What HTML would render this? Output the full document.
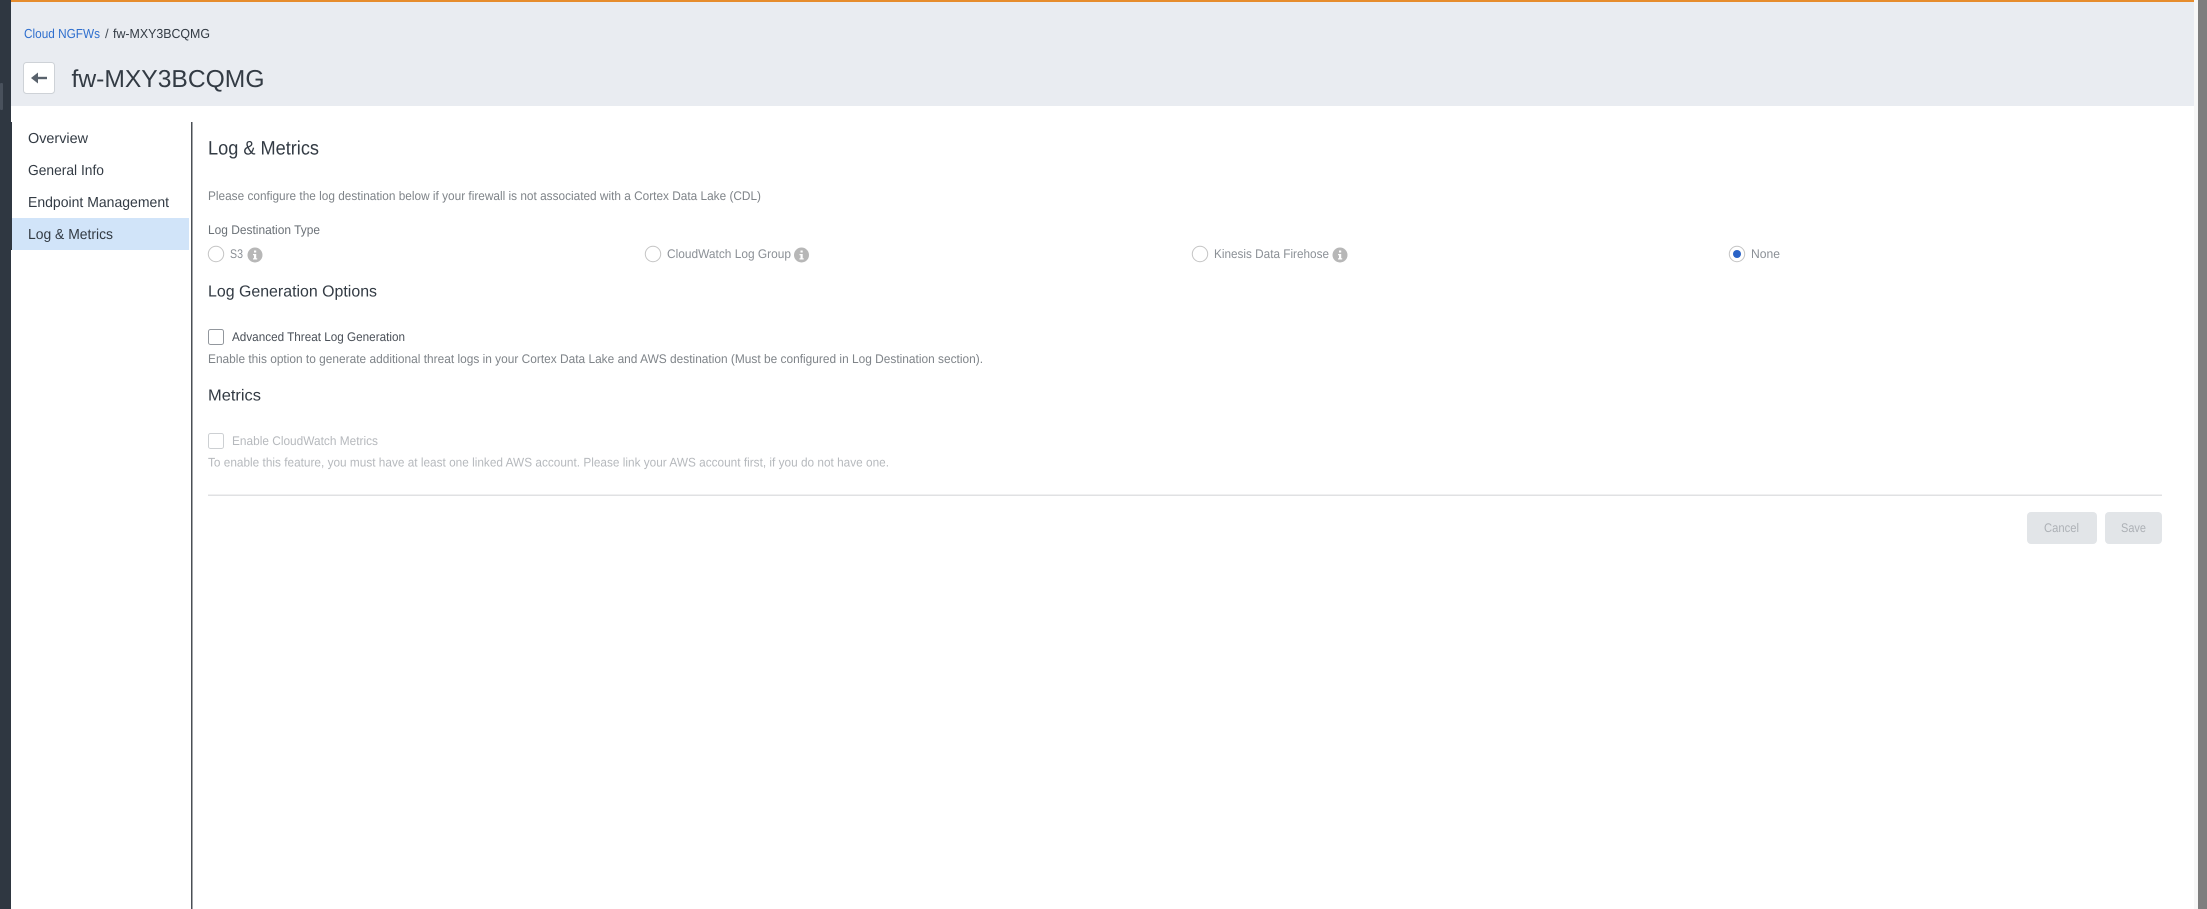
<!DOCTYPE html>
<html lang="en">
<head>
<meta charset="utf-8">
<title>fw-MXY3BCQMG</title>
<style>
html,body{margin:0;padding:0;width:2207px;height:909px;overflow:hidden;background:#fff}
svg{display:block;position:absolute;left:0;top:0}
text{font-family:"Liberation Sans",sans-serif;text-rendering:geometricPrecision}
</style>
</head>
<body>
<svg width="2207" height="909" viewBox="0 0 2207 909" xmlns="http://www.w3.org/2000/svg">
  <rect x="0" y="0" width="2207" height="909" fill="#fff"/>
  <!-- left dark strip -->
  <rect x="0" y="0" width="11" height="909" fill="#2f3741"/>
  <rect x="0" y="83" width="3" height="27" rx="1" fill="#49515c"/>
  <rect x="11" y="122" width="1" height="128" fill="#2f3741"/>
  <!-- right strip -->
  <rect x="2194" y="0" width="4" height="909" fill="#f7f7f7"/>
  <rect x="2198" y="0" width="9" height="909" fill="#7e7e7e"/>
  <!-- header -->
  <rect x="11" y="0" width="2183" height="106" fill="#e9ecf1"/>
  <rect x="11" y="0" width="2183" height="2" fill="#e68c2d"/>

  <text x="24" y="38" font-size="13" fill="#2f6fce" textLength="76" lengthAdjust="spacingAndGlyphs">Cloud NGFWs</text>
  <text x="105" y="38" font-size="13" fill="#444c55">/</text>
  <text x="113" y="38" font-size="13" fill="#333b44" textLength="97" lengthAdjust="spacingAndGlyphs">fw-MXY3BCQMG</text>

  <rect x="23.5" y="62.5" width="31" height="31" rx="3" fill="#fff" stroke="#ced2d7"/>
  <path d="M33 78H47" stroke="#59626c" stroke-width="2.400" fill="none"/>
  <path d="M31 78L38 72.500V83.500Z" fill="#59626c"/>
  <text x="71.500" y="87" font-size="24.500" fill="#333b44" textLength="193" lengthAdjust="spacingAndGlyphs">fw-MXY3BCQMG</text>

  <!-- sidebar -->
  <rect x="12" y="218" width="177" height="32" fill="#d1e4f9"/>
  <rect x="191" y="122" width="1.500" height="787" fill="#4a4f55"/>
  <text x="28" y="143" font-size="14.500" fill="#333b44" textLength="60" lengthAdjust="spacingAndGlyphs">Overview</text>
  <text x="28" y="175" font-size="14.500" fill="#333b44" textLength="76" lengthAdjust="spacingAndGlyphs">General Info</text>
  <text x="28" y="207" font-size="14.500" fill="#333b44" textLength="141" lengthAdjust="spacingAndGlyphs">Endpoint Management</text>
  <text x="28" y="239" font-size="14.500" fill="#333b44" textLength="85" lengthAdjust="spacingAndGlyphs">Log &amp; Metrics</text>

  <!-- content -->
  <text x="208" y="154.500" font-size="19.500" fill="#333b44" textLength="111" lengthAdjust="spacingAndGlyphs">Log &amp; Metrics</text>
  <text x="208" y="200" font-size="12.500" fill="#7f8489" textLength="553" lengthAdjust="spacingAndGlyphs">Please configure the log destination below if your firewall is not associated with a Cortex Data Lake (CDL)</text>
  <text x="208" y="234" font-size="12.500" fill="#6b7177" textLength="112" lengthAdjust="spacingAndGlyphs">Log Destination Type</text>

  <!-- radios -->
  <circle cx="216" cy="254" r="7.700" fill="#fff" stroke="#c4c4c4"/>
  <text x="230" y="258" font-size="12.500" fill="#8b9096" textLength="13" lengthAdjust="spacingAndGlyphs">S3</text>
  <circle cx="255" cy="255" r="7.500" fill="#b7b7b7"/>
  <rect x="254" y="250.500" width="2.200" height="2" fill="#fff"/>
  <path d="M253 254H256.200V258.200H257.200V259.500H253V258.200H254V255.200H253Z" fill="#fff"/>

  <circle cx="653" cy="254" r="7.700" fill="#fff" stroke="#c4c4c4"/>
  <text x="667" y="258" font-size="12.500" fill="#8b9096" textLength="124" lengthAdjust="spacingAndGlyphs">CloudWatch Log Group</text>
  <circle cx="801.500" cy="255" r="7.500" fill="#b7b7b7"/>
  <rect x="800.500" y="250.500" width="2.200" height="2" fill="#fff"/>
  <path d="M799.500 254H802.700V258.200H803.700V259.500H799.500V258.200H800.500V255.200H799.500Z" fill="#fff"/>

  <circle cx="1200" cy="254" r="7.700" fill="#fff" stroke="#c4c4c4"/>
  <text x="1214" y="258" font-size="12.500" fill="#8b9096" textLength="115" lengthAdjust="spacingAndGlyphs">Kinesis Data Firehose</text>
  <circle cx="1340" cy="255" r="7.500" fill="#b7b7b7"/>
  <rect x="1339" y="250.500" width="2.200" height="2" fill="#fff"/>
  <path d="M1338 254H1341.200V258.200H1342.200V259.500H1338V258.200H1339V255.200H1338Z" fill="#fff"/>

  <circle cx="1737" cy="254" r="7.700" fill="#fff" stroke="#c4c4c4"/>
  <circle cx="1737" cy="254" r="4" fill="#2a63c7"/>
  <text x="1751" y="258" font-size="12.500" fill="#8b9096" textLength="29" lengthAdjust="spacingAndGlyphs">None</text>

  <text x="208" y="296.500" font-size="16" fill="#333b44" textLength="169" lengthAdjust="spacingAndGlyphs">Log Generation Options</text>
  <rect x="208.500" y="329.500" width="15" height="15" rx="2" fill="#fff" stroke="#92979d"/>
  <text x="232" y="341" font-size="12.500" fill="#4a5058" textLength="173" lengthAdjust="spacingAndGlyphs">Advanced Threat Log Generation</text>
  <text x="208" y="363" font-size="12.500" fill="#7f8489" textLength="775" lengthAdjust="spacingAndGlyphs">Enable this option to generate additional threat logs in your Cortex Data Lake and AWS destination (Must be configured in Log Destination section).</text>

  <text x="208" y="400.500" font-size="16" fill="#333b44" textLength="53" lengthAdjust="spacingAndGlyphs">Metrics</text>
  <rect x="208.500" y="433.500" width="15" height="15" rx="2" fill="#fff" stroke="#cdd0d3"/>
  <text x="232" y="445" font-size="12.500" fill="#b6b9bd" textLength="146" lengthAdjust="spacingAndGlyphs">Enable CloudWatch Metrics</text>
  <text x="208" y="466.500" font-size="12.500" fill="#b6b9bd" textLength="681" lengthAdjust="spacingAndGlyphs">To enable this feature, you must have at least one linked AWS account. Please link your AWS account first, if you do not have one.</text>

  <rect x="208" y="494.500" width="1954" height="1.500" fill="#e0e1e3"/>

  <!-- buttons -->
  <rect x="2027" y="512" width="70" height="32" rx="4" fill="#e2e5e8"/>
  <text x="2044" y="532" font-size="12.500" fill="#adb1b6" textLength="35" lengthAdjust="spacingAndGlyphs">Cancel</text>
  <rect x="2105" y="512" width="57" height="32" rx="4" fill="#e2e5e8"/>
  <text x="2121" y="532" font-size="12.500" fill="#adb1b6" textLength="25" lengthAdjust="spacingAndGlyphs">Save</text>
</svg>
</body>
</html>
